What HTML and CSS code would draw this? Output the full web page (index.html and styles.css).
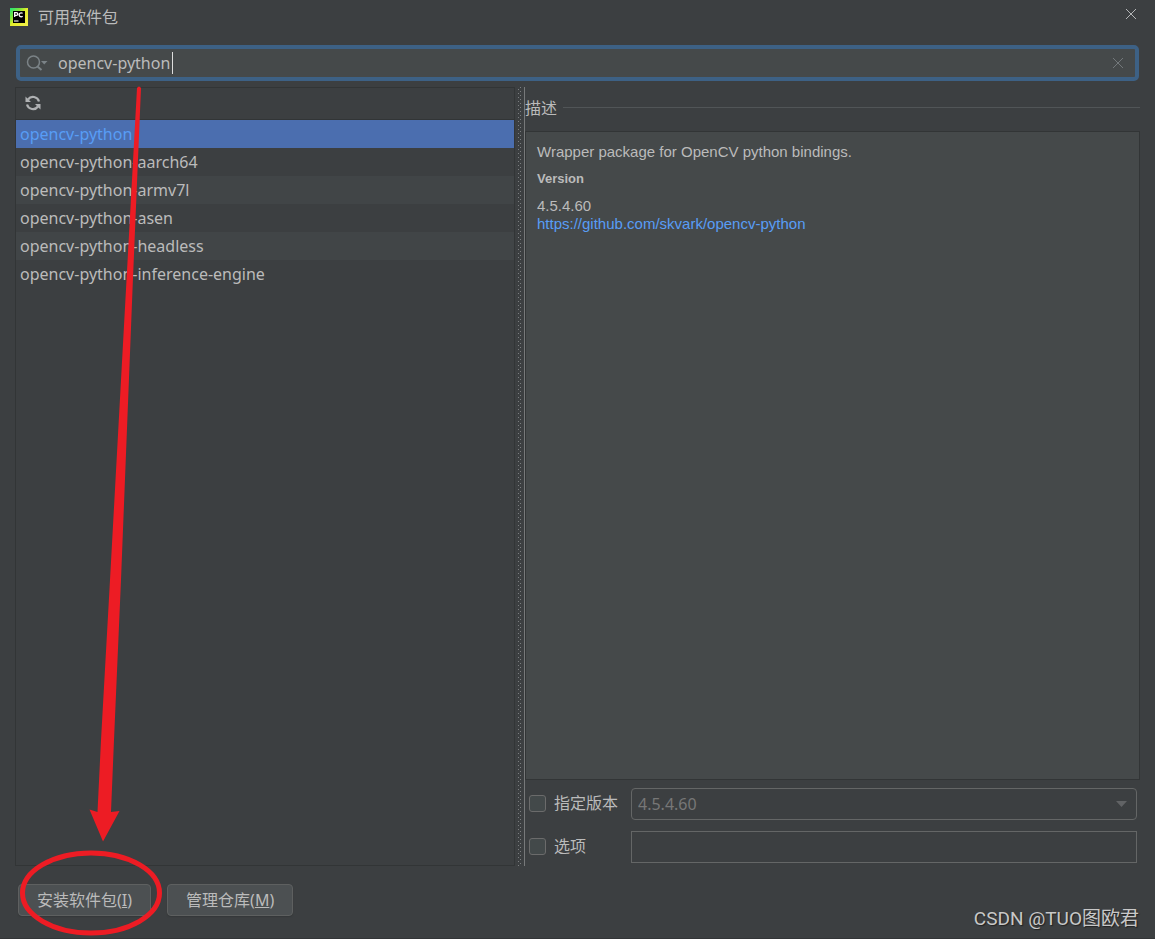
FILE: index.html
```html
<!DOCTYPE html>
<html lang="zh-CN">
<head>
<meta charset="utf-8">
<title>可用软件包</title>
<link rel="stylesheet" href="styles.css">
</head>
<body>
<div class="dialog">
  <header class="titlebar">
    <svg class="app-icon" viewBox="0 0 18 18" aria-hidden="true">
      <defs>
        <linearGradient id="frame" x1="0" y1="0" x2="1" y2="1">
          <stop offset="0" stop-color="#21e37a"/>
          <stop offset=".3" stop-color="#7be63c"/>
          <stop offset=".5" stop-color="#e6ee2c"/>
          <stop offset="1" stop-color="#f2f04a"/>
        </linearGradient>
      </defs>
      <rect width="18" height="18" fill="url(#frame)"/>
      <rect x="3" y="3" width="12" height="12" fill="#000"/>
      <path d="M4.700 9V4.700h1.700a1.300 1.300 0 0 1 0 2.700H4.700M12.600 5.400a2 2 0 1 0 0 2.800" fill="none" stroke="#fff" stroke-width="1.300"/>
      <path d="M4 13h4.500" stroke="#fff" stroke-width="1.100"/>
    </svg>
    <h1 class="title">可用软件包</h1>
    <button class="close" type="button" aria-label="关闭">
      <svg viewBox="0 0 10 10"><path d="M0 0L10 10M10 0L0 10"/></svg>
    </button>
  </header>

  <div class="search">
    <svg class="search-icon" viewBox="0 0 22 18" aria-hidden="true">
      <circle cx="7.500" cy="8" r="6" fill="none" stroke="#7b8387" stroke-width="1.500"/>
      <path d="M11.500 12.500L15.500 16" stroke="#7b8387" stroke-width="2"/>
      <path d="M15 7h6.500l-3.250 3.500z" fill="#7b8387"/>
    </svg>
    <div class="search-box">
      <input class="search-input" type="text" value="opencv-python" aria-label="搜索软件包">
      <span class="caret"></span>
    </div>
    <button class="clear" type="button" aria-label="清除">
      <svg viewBox="0 0 10 10"><path d="M0 0L10 10M10 0L0 10"/></svg>
    </button>
  </div>

  <main class="panes">
    <section class="list-pane">
      <div class="toolbar">
        <button class="refresh" type="button" aria-label="刷新">
          <svg viewBox="0 0 18 18">
            <g fill="none" stroke="#afb1b3" stroke-width="2.200">
              <path d="M4 5.500A6.200 6.200 0 0 1 15 7.500"/>
              <path d="M14 12.500A6.200 6.200 0 0 1 3 10.500"/>
            </g>
            <path d="M1.500 2.500v5.500h5.500zM16.500 15.500V10h-5.500z" fill="#afb1b3"/>
          </svg>
        </button>
      </div>
      <ul class="packages">
        <li class="package selected">opencv-python</li>
        <li class="package">opencv-python-aarch64</li>
        <li class="package">opencv-python-armv7l</li>
        <li class="package">opencv-python-asen</li>
        <li class="package">opencv-python-headless</li>
        <li class="package">opencv-python-inference-engine</li>
      </ul>
    </section>
    <div class="splitter"></div>
    <section class="detail-pane">
      <h2 class="section-title">描述</h2>
      <div class="description">
        <p class="summary">Wrapper package for OpenCV python bindings.</p>
        <h3 class="version-title">Version</h3>
        <p class="version">4.5.4.60</p>
        <a class="link" href="https://github.com/skvark/opencv-python">https://github.com/skvark/opencv-python</a>
      </div>
      <div class="options">
        <label class="option"><input class="check" type="checkbox">指定版本</label>
        <div class="select-box">
          <select class="field select" disabled aria-label="指定版本"><option>4.5.4.60</option></select>
          <svg class="select-arrow" viewBox="0 0 11 6"><path d="M0 0h11L5.500 6z" fill="#616365"/></svg>
        </div>
        <label class="option"><input class="check" type="checkbox">选项</label>
        <input class="field" type="text" disabled aria-label="选项">
      </div>
    </section>
  </main>

  <footer class="actions">
    <button class="button" type="button">安装软件包(<u>I</u>)</button>
    <button class="button" type="button">管理仓库(<u>M</u>)</button>
  </footer>

  <svg class="annotation" width="170" height="939" viewBox="0 0 170 939" aria-hidden="true">
    <path d="M137 88Q139 85 141 88L132.500 290L121 580L114 740L111 812L119.500 811L103 841.500L89.500 809.500L97.500 812L101 740L110 580L126.500 280Z" fill="#ed1c24"/>
    <ellipse cx="91" cy="893" rx="68.500" ry="40" fill="none" stroke="#ed1c24" stroke-width="5"/>
  </svg>
  <div class="watermark">CSDN @TUO图欧君</div>
</div>
</body>
</html>
```
FILE: styles.css
```css
* {
  box-sizing: border-box;
}

body {
  margin: 0;
  background: #3c3f41;
  color: #bbbbbb;
  font: 16px/20px "Noto Sans", "Noto Sans CJK SC", sans-serif;
}

h1, h2, h3, p, ul {
  margin: 0;
  padding: 0;
  font-weight: normal;
}

button, input, select {
  font: inherit;
  color: inherit;
}

svg {
  display: block;
}

.dialog {
  position: relative;
  display: flex;
  flex-direction: column;
  min-height: 100vh;
  padding: 0 15px 22px;
  border-bottom: 1px solid #333537;
}

.titlebar {
  display: flex;
  align-items: center;
  height: 34px;
  margin: 0 -5px 11px;
}

.app-icon {
  width: 18px;
  height: 18px;
}

.title {
  flex: 1;
  margin-left: 10px;
  font-size: 16px;
}

.close, .clear, .refresh {
  padding: 0;
  border: 0;
  background: none;
}

.close {
  align-self: flex-start;
  padding: 9px 9px 9px 10px;
}

.close svg, .clear svg {
  width: 10px;
  height: 10px;
  overflow: visible;
  fill: none;
  stroke: #b4b6b7;
  stroke-width: 1;
}

.clear svg {
  stroke: #73787b;
}

.search {
  display: flex;
  align-items: center;
  height: 36px;
  margin: 0 1px 6px;
  padding: 0 12px 0 6px;
  border: 4px solid #3d6185;
  border-radius: 5px;
  background: #45494a;
}

.search-icon {
  width: 22px;
  height: 18px;
}

.search-box {
  position: relative;
  flex: 1;
  margin-left: 10px;
}

.search-input {
  display: block;
  width: 100%;
  height: 26px;
  padding: 0;
  border: 0;
  outline: 0;
  background: none;
}

.caret {
  position: absolute;
  top: 2px;
  left: 114px;
  width: 1px;
  height: 22px;
  background: #dddddd;
}

.panes {
  flex: 1;
  display: grid;
  grid-template-columns: 500fr 10px 615fr;
}

.list-pane {
  border: 1px solid #323536;
}

.toolbar {
  display: flex;
  align-items: center;
  height: 32px;
  padding: 0 8px 1px;
  border-bottom: 1px solid #323536;
}

.refresh svg {
  width: 18px;
  height: 18px;
}

.packages {
  list-style: none;
}

.package {
  height: 28px;
  padding-left: 4px;
  line-height: 28px;
}

.package:nth-child(odd) {
  background: #414547;
}

.package.selected {
  background: #4b6eaf;
  color: #589df6;
}

.splitter {
  margin-left: 3px;
  border-right: 1px solid #77797a;
  background:
    linear-gradient(#7c7f81 1px, transparent 1px) 0 2px / 1px 4px repeat-y,
    linear-gradient(#7c7f81 1px, transparent 1px) 2px 4px / 1px 4px repeat-y;
}

.detail-pane {
  display: flex;
  flex-direction: column;
  min-width: 0;
}

.section-title {
  display: flex;
  align-items: center;
  gap: 6px;
  height: 44px;
  padding-bottom: 3px;
  font-size: 16px;
}

.section-title::after {
  content: "";
  flex: 1;
  border-top: 1px solid #515557;
}

.description {
  flex: 1;
  padding: 11px;
  border: 1px solid #323536;
  background: #45494a;
  font: 15px/18px "Liberation Sans", Arial, sans-serif;
}

.version-title {
  margin: 9px 0;
  font-size: 13px;
  font-weight: bold;
}

.link {
  color: #589df6;
  text-decoration: none;
}

.options {
  display: grid;
  grid-template-columns: 102px 1fr;
  align-items: center;
  gap: 11px 0;
  padding: 8px 3px 3px 4px;
}

.option {
  display: flex;
  align-items: center;
  gap: 8px;
  padding-bottom: 2px;
}

.check {
  appearance: none;
  width: 17px;
  height: 17px;
  margin: 0;
  border: 1px solid #6b6b6b;
  border-radius: 3px;
  background: #43494a;
}

.field {
  display: block;
  width: 100%;
  height: 32px;
  padding: 0 6px;
  border: 1px solid #646666;
  background: #3c3f41;
}

.select-box {
  position: relative;
}

.select {
  appearance: none;
  border-radius: 4px;
  color: #777777;
  opacity: 1;
}

.select-arrow {
  position: absolute;
  top: 13px;
  right: 10px;
  width: 11px;
  height: 6px;
}

.actions {
  display: flex;
  gap: 16px;
  padding: 18px 3px 0;
}

.button {
  height: 32px;
  padding: 0 18px;
  border: 1px solid #5e6060;
  border-radius: 4px;
  background: #4c5052;
  box-shadow: 0 1px 1px #35383a;
}

.annotation {
  position: absolute;
  top: 0;
  left: 0;
  pointer-events: none;
}

.watermark {
  position: absolute;
  right: 16px;
  bottom: 6px;
  color: #c8c8c8;
  font: 19px/26px Roboto, "Noto Sans CJK SC", sans-serif;
  text-shadow: 1px 1px 1px #222222;
}
```
